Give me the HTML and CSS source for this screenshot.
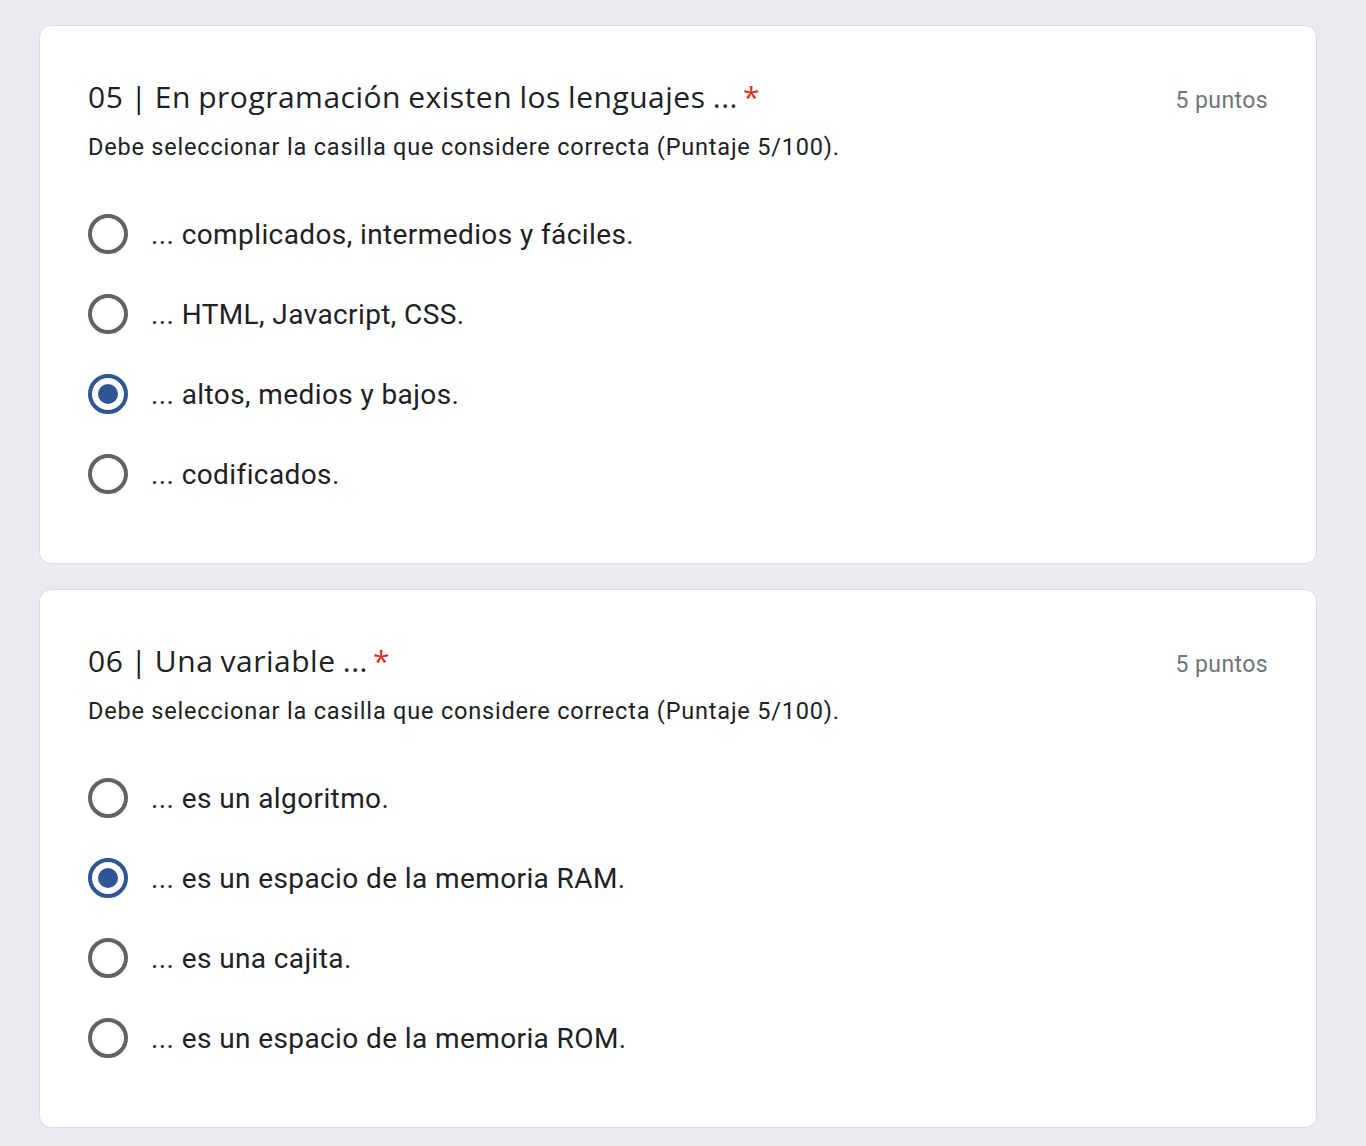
FILE: index.html
```html
<!DOCTYPE html>
<html lang="es">
<head>
<meta charset="utf-8">
<title>Formulario</title>
<link rel="stylesheet" href="styles.css">
</head>
<body>
<main class="page">
  <section class="card">
    <div class="head">
      <h2 class="title">05 | En programación existen los lenguajes ...<span class="req">*</span></h2>
      <span class="points">5 puntos</span>
    </div>
    <p class="desc">Debe seleccionar la casilla que considere correcta (Puntaje 5/100).</p>
    <ul class="options">
      <li class="opt"><span class="radio"></span><span class="label">... complicados, intermedios y fáciles.</span></li>
      <li class="opt"><span class="radio"></span><span class="label">... HTML, Javacript, CSS.</span></li>
      <li class="opt"><span class="radio checked"></span><span class="label">... altos, medios y bajos.</span></li>
      <li class="opt"><span class="radio"></span><span class="label">... codificados.</span></li>
    </ul>
  </section>
  <section class="card">
    <div class="head">
      <h2 class="title">06 | Una variable ...<span class="req">*</span></h2>
      <span class="points">5 puntos</span>
    </div>
    <p class="desc">Debe seleccionar la casilla que considere correcta (Puntaje 5/100).</p>
    <ul class="options">
      <li class="opt"><span class="radio"></span><span class="label">... es un algoritmo.</span></li>
      <li class="opt"><span class="radio checked"></span><span class="label">... es un espacio de la memoria RAM.</span></li>
      <li class="opt"><span class="radio"></span><span class="label">... es una cajita.</span></li>
      <li class="opt"><span class="radio"></span><span class="label">... es un espacio de la memoria ROM.</span></li>
    </ul>
  </section>
</main>
</body>
</html>
```
FILE: styles.css
```css
html, body {
  margin: 0;
  padding: 0;
  background: #e9ebf0;
}
body {
  font-family: Roboto, "Liberation Sans", sans-serif;
  color: #202124;
}
.page {
  display: flex;
  flex-direction: column;
  gap: 25px;
  padding: 25px 0 0 39px;
  width: 1278px;
}
.card {
  background: #fff;
  border: 1px solid #dadce0;
  border-radius: 12px;
  padding: 51px 48px 49px 48px;
}
.head {
  display: flex;
  justify-content: space-between;
  align-items: baseline;
}
.title {
  margin: 0;
  font-family: "Open Sans", Roboto, sans-serif;
  font-weight: 400;
  font-size: 30px;
  line-height: 40px;
  color: #202124;
  letter-spacing: 0.5px;
  word-spacing: -1px;
}
.req {
  color: #d93025;
  padding-left: 5px;
}
.points {
  font-size: 23px;
  color: #70757a;
  letter-spacing: 0.4px;
}
.desc {
  margin: 14px 0 0 0;
  font-size: 23.5px;
  line-height: 32px;
  letter-spacing: 0.8px;
}
.options {
  list-style: none;
  margin: 31px 0 0 0;
  padding: 0;
}
.opt {
  display: flex;
  align-items: center;
  height: 80px;
  gap: 23px;
}
.radio {
  box-sizing: border-box;
  width: 40px;
  height: 40px;
  border: 4px solid #5f6368;
  border-radius: 50%;
  display: flex;
  align-items: center;
  justify-content: center;
  flex: none;
}
.radio.checked {
  border-color: #2f5592;
}
.radio.checked::after {
  content: "";
  width: 20px;
  height: 20px;
  border-radius: 50%;
  background: #2f5592;
}
.label {
  font-size: 28px;
  letter-spacing: 0.4px;
}
```
